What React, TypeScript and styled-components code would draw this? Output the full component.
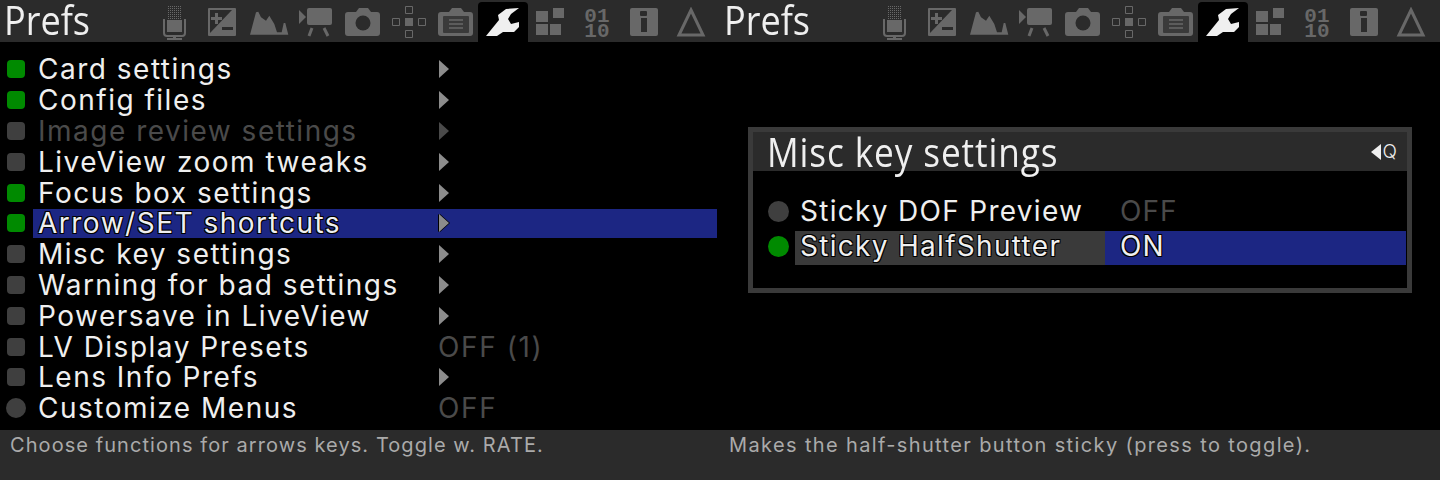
import styled, { createGlobalStyle } from "styled-components";

const GRAY = "#686868";
const DARK = "#2b2b2b";

const Global = createGlobalStyle`
  html, body { margin: 0; background: #000; }
  body { width: 1440px; height: 480px; overflow: hidden; font-family: "Inter", sans-serif; }
`;

const renderIcons = () => [
  <svg width="26" height="36" viewBox="0 0 26 36" key="mic">
    <defs>
      <pattern id="dots" width="2" height="2" patternUnits="userSpaceOnUse">
        <rect width="1" height="1" fill={GRAY} />
      </pattern>
    </defs>
    <rect x="5" y="2" width="15" height="14" fill="url(#dots)" />
    <rect x="5" y="16" width="15" height="12" fill={GRAY} />
    <path d="M2 15v14q0 3 3 3h15q3 0 3-3V15" fill="none" stroke={GRAY} strokeWidth="2" />
    <path d="M11 32h3v3h-3z M5 34h15v2H5z" fill={GRAY} />
  </svg>,
  <svg width="30" height="30" viewBox="0 0 30 30" key="expo">
    <rect x="1" y="1" width="28" height="28" rx="1" fill={GRAY} />
    <path d="M3 3h22L3 26z" fill={DARK} />
    <path d="M8 6h3v4h4v3h-4v4H8v-4H4v-3h4z" fill={GRAY} />
    <path d="M15 20h11v3H15z" fill={DARK} />
  </svg>,
  <svg width="40" height="26" viewBox="0 0 40 26" key="hist">
    <path d="M1 25.700 7 3.300 9.300 2.700 12 8.300 17 11.700 20.300 6.700 25.300 15 28 23.300H32.700L34.700 14H36.300L39.300 25.700z" fill={GRAY} />
  </svg>,
  <svg width="36" height="30" viewBox="0 0 36 30" key="movie">
    <path d="M1 3 8 10 1 17z" fill={GRAY} />
    <rect x="9" y="1" width="25" height="17" rx="2" fill={GRAY} />
    <path d="M14 21 11 29 M26 21 30 29" stroke={GRAY} strokeWidth="3" />
  </svg>,
  <svg width="36" height="30" viewBox="0 0 36 30" key="photo">
    <path d="M3 5h8l3-4h9l3 4h6q3 0 3 3v18q0 3-3 3H3q-3 0-3-3V8q0-3 3-3z" fill={GRAY} />
    <circle cx="18" cy="16" r="7.500" fill={DARK} />
  </svg>,
  <svg width="36" height="32" viewBox="0 0 36 32" key="focus">
    <path d="M14.500 .5h7v7h-7z M14.500 24.500h7v7h-7z M1.500 12.500h7v7h-7z M27.500 12.500h7v7h-7z" fill="none" stroke={GRAY} />
    <rect x="14" y="12" width="8" height="8" fill={GRAY} />
  </svg>,
  <svg width="36" height="30" viewBox="0 0 36 30" key="card">
    <path d="M3 5h8l3-4h9l3 4h6q3 0 3 3v18q0 3-3 3H3q-3 0-3-3V8q0-3 3-3z" fill={GRAY} />
    <rect x="5" y="9" width="26" height="17" rx="1" fill="#3a3a3a" />
    <path d="M11 13h14M11 17h14M11 21h14" stroke={GRAY} strokeWidth="1.500" />
  </svg>,
  <svg width="36" height="30" viewBox="0 0 36 30" key="wrench">
    <path d="M1 29 14 13 13 8 21 2 34 1 26 7 23 12 26 17 34 15 34 20 29 25 18 25 12 29z" fill="#efefef" />
  </svg>,
  <svg width="30" height="30" viewBox="0 0 30 30" key="modules">
    <path d="M1 4h12v11H1z M18 1h11v10H18z M1 17h12v11H1z M15 17h11v11H15z" fill={GRAY} />
  </svg>,
  <Bits key="debug">
    <span>01</span>
    <span>10</span>
  </Bits>,
  <svg width="30" height="30" viewBox="0 0 30 30" key="info">
    <rect x="1" y="1" width="28" height="28" rx="2" fill={GRAY} />
    <rect x="11" y="4" width="7" height="5" rx="1" fill={DARK} />
    <rect x="12" y="11" width="6" height="14" fill={DARK} />
  </svg>,
  <svg width="30" height="30" viewBox="0 0 30 30" key="delta">
    <path d="M15 3 27 28H3z" fill="none" stroke={GRAY} strokeWidth="3" />
  </svg>,
];

const ACTIVE_TAB = 7;

function TopBar() {
  return (
    <Bar>
      <Title>Prefs</Title>
      <Tabs>
        {renderIcons().map((icon, i) => (
          <Tab key={i} $active={i === ACTIVE_TAB}>
            {icon}
          </Tab>
        ))}
      </Tabs>
    </Bar>
  );
}

interface MenuItem {
  name: string;
  led: "on" | "off" | "round";
  value?: string;
  dim?: boolean;
  selected?: boolean;
}

const menu: MenuItem[] = [
  { name: "Card settings", led: "on" },
  { name: "Config files", led: "on" },
  { name: "Image review settings", led: "off", dim: true },
  { name: "LiveView zoom tweaks", led: "off" },
  { name: "Focus box settings", led: "on" },
  { name: "Arrow/SET shortcuts", led: "on", selected: true },
  { name: "Misc key settings", led: "off" },
  { name: "Warning for bad settings", led: "off" },
  { name: "Powersave in LiveView", led: "off" },
  { name: "LV Display Presets", led: "off", value: "OFF (1)" },
  { name: "Lens Info Prefs", led: "off" },
  { name: "Customize Menus", led: "round", value: "OFF" },
];

export default function App() {
  return (
    <>
      <Global />
      <Screens>
        <Screen>
          <TopBar />
          <Content>
            <MenuList>
              {menu.map((item) => (
                <Row key={item.name}>
                  <Led $on={item.led === "on"} $round={item.led === "round"} />
                  <RowBody $selected={item.selected}>
                    <Name $dim={item.dim} $selected={item.selected}>
                      {item.name}
                    </Name>
                    {item.value ? <Value>{item.value}</Value> : <Arrow $dim={item.dim} $selected={item.selected} />}
                  </RowBody>
                </Row>
              ))}
            </MenuList>
          </Content>
          <Footer>Choose functions for arrows keys. Toggle w. RATE.</Footer>
        </Screen>
        <Screen>
          <TopBar />
          <Content $center>
            <Dialog>
              <DialogHead>
                <DialogTitle>Misc key settings</DialogTitle>
                <QHint>
                  <QArrow />Q
                </QHint>
              </DialogHead>
              <DialogBody>
                <DialogRow>
                  <Dot />
                  <DialogName>Sticky DOF Preview</DialogName>
                  <DialogValue>OFF</DialogValue>
                </DialogRow>
                <DialogRow>
                  <Dot $on />
                  <DialogName $selected>Sticky HalfShutter</DialogName>
                  <DialogValue $selected>ON</DialogValue>
                </DialogRow>
              </DialogBody>
            </Dialog>
          </Content>
          <Footer $inset>Makes the half-shutter button sticky (press to toggle).</Footer>
        </Screen>
      </Screens>
    </>
  );
}

const outline = `
  text-shadow: -1px -1px 0 #000, 1px -1px 0 #000, -1px 1px 0 #000, 1px 1px 0 #000;
`;

const Screens = styled.div`
  display: flex;
  width: 1440px;
  height: 480px;
`;

const Screen = styled.div`
  display: flex;
  flex-direction: column;
  width: 720px;
  height: 480px;
`;

const Bar = styled.header`
  display: flex;
  height: 42px;
  background: ${DARK};
`;

const Title = styled.h1`
  flex: none;
  width: 151.5px;
  margin: 0;
  padding-left: 4px;
  box-sizing: border-box;
  font-family: "Open Sans", sans-serif;
  font-weight: 500;
  font-size: 41px;
  line-height: 38px;
  color: #efefef;
  transform: scaleX(0.88);
  transform-origin: 4px 0;
`;

const Tabs = styled.nav`
  display: flex;
`;

const Tab = styled.div<{ $active?: boolean }>`
  display: flex;
  align-items: center;
  justify-content: center;
  flex: none;
  width: ${(p) => (p.$active ? "50px" : "46.9px")};
  height: 40px;
  margin: ${(p) => (p.$active ? "2px -1.55px 0" : "2px 0 0")};
  border-radius: 4px 4px 0 0;
  background: ${(p) => (p.$active ? "#000" : "transparent")};
`;

const Bits = styled.div`
  display: flex;
  flex-direction: column;
  align-items: center;
  padding-top: 4px;
  font-family: "Liberation Mono", monospace;
  font-weight: 700;
  font-size: 21px;
  line-height: 15.5px;
  color: ${GRAY};
`;

const Content = styled.main<{ $center?: boolean }>`
  flex: 1;
  box-sizing: border-box;
  padding: ${(p) => (p.$center ? "85px 28px 0" : "12px 0 0 7px")};
`;

const MenuList = styled.div`
  display: flex;
  flex-direction: column;
`;

const Row = styled.div`
  display: flex;
  align-items: center;
  height: 30.8px;
`;

const Led = styled.span<{ $on?: boolean; $round?: boolean }>`
  flex: none;
  width: ${(p) => (p.$round ? "20px" : "18px")};
  height: ${(p) => (p.$round ? "20px" : "18px")};
  margin: ${(p) => (p.$round ? "0 7px 0 -1px" : "0 8px 0 0")};
  border-radius: ${(p) => (p.$round ? "50%" : "4px")};
  background: ${(p) => (p.$on ? "#008a00" : "#3f3f3f")};
`;

const RowBody = styled.div<{ $selected?: boolean }>`
  display: flex;
  align-items: center;
  width: 684px;
  height: 29px;
  background: ${(p) => (p.$selected ? "#1c2683" : "transparent")};
`;

const Name = styled.span<{ $dim?: boolean; $selected?: boolean }>`
  flex: none;
  box-sizing: border-box;
  width: 405px;
  padding-left: 5px;
  font-size: 28px;
  letter-spacing: 1.5px;
  line-height: 26px;
  white-space: nowrap;
  color: ${(p) => (p.$dim ? "#4a4a4a" : "#efefef")};
  ${(p) => p.$selected && outline}
`;

const Value = styled.span`
  font-size: 28px;
  letter-spacing: 1.6px;
  line-height: 26px;
  color: #4a4a4a;
`;

const Arrow = styled.span<{ $dim?: boolean; $selected?: boolean }>`
  width: 0;
  height: 0;
  margin-left: 1px;
  border-left: 10px solid ${(p) => (p.$dim ? "#4a4a4a" : "#8c8c8c")};
  border-top: 9px solid transparent;
  border-bottom: 9px solid transparent;
  ${(p) => p.$selected && "filter: drop-shadow(1px 0 0 #000) drop-shadow(-1px 0 0 #000);"}
`;

const Footer = styled.footer<{ $inset?: boolean }>`
  height: 50px;
  box-sizing: border-box;
  padding: 3px 0 0 ${(p) => (p.$inset ? "9px" : "10px")};
  background: ${DARK};
  font-size: 20px;
  line-height: 24px;
  letter-spacing: ${(p) => (p.$inset ? "1.37px" : "1.07px")};
  white-space: nowrap;
  color: #aaa;
`;

const Dialog = styled.section`
  width: 664px;
  height: 166px;
  box-sizing: border-box;
  border: 5px solid #3a3a3a;
`;

const DialogHead = styled.div`
  display: flex;
  align-items: center;
  justify-content: space-between;
  height: 39px;
  padding: 0 10px 0 14px;
  background: ${DARK};
`;

const DialogTitle = styled.h2`
  margin: 0;
  font-family: "Open Sans", sans-serif;
  font-weight: 500;
  font-size: 40px;
  line-height: 39px;
  letter-spacing: 1px;
  white-space: nowrap;
  color: #efefef;
  transform: scaleX(0.88);
  transform-origin: 0 0;
`;

const QHint = styled.span`
  display: flex;
  align-items: center;
  gap: 2px;
  font-size: 19px;
  font-weight: 300;
  color: #efefef;
`;

const QArrow = styled.i`
  width: 0;
  height: 0;
  border-right: 10px solid #efefef;
  border-top: 8px solid transparent;
  border-bottom: 8px solid transparent;
`;

const DialogBody = styled.div`
  display: flex;
  flex-direction: column;
  gap: 1px;
  padding-top: 25px;
`;

const DialogRow = styled.div`
  display: flex;
  align-items: stretch;
  height: 34px;
  padding-left: 15px;
`;

const Dot = styled.span<{ $on?: boolean }>`
  flex: none;
  align-self: center;
  width: 21px;
  height: 21px;
  margin: -3px 6px 0 0;
  border-radius: 50%;
  background: ${(p) => (p.$on ? "#008a00" : "#3f3f3f")};
`;

const DialogName = styled.span<{ $selected?: boolean }>`
  flex: none;
  box-sizing: border-box;
  width: 310px;
  padding-left: 5px;
  font-size: 28px;
  letter-spacing: 1.3px;
  line-height: 30px;
  white-space: nowrap;
  color: #efefef;
  background: ${(p) => (p.$selected ? "#3a3a3a" : "transparent")};
  ${(p) => p.$selected && outline}
`;

const DialogValue = styled.span<{ $selected?: boolean }>`
  flex: none;
  box-sizing: border-box;
  width: 301px;
  padding-left: 15px;
  font-size: 28px;
  letter-spacing: 1px;
  line-height: 30px;
  color: ${(p) => (p.$selected ? "#efefef" : "#4a4a4a")};
  background: ${(p) => (p.$selected ? "#1c2683" : "transparent")};
  ${(p) => p.$selected && outline}
`;
